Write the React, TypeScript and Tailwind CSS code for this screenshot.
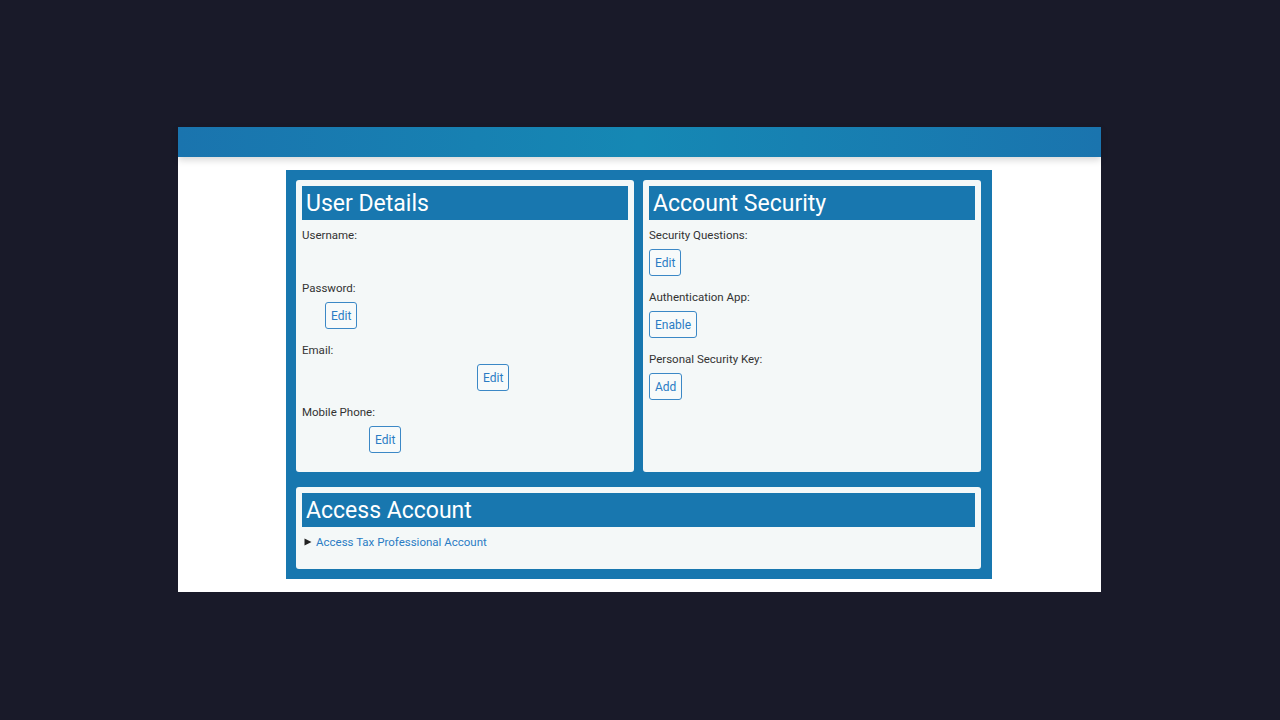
import React from "react";

const font = { fontFamily: "Roboto, 'Liberation Sans', sans-serif" };

function Btn({ children, ml = 0 }: { children: React.ReactNode; ml?: number }) {
  return (
    <div className="mt-[6px] flex" style={{ marginLeft: ml }}>
      <button className="h-[27px] rounded-[3px] border border-[#3b88c6] bg-[#f7fafa] px-[5px] text-[12px] leading-none text-[#2a7cc4]">
        {children}
      </button>
    </div>
  );
}

function Label({ children }: { children: React.ReactNode }) {
  return <div className="h-[16px] text-[11.5px] leading-[16px] text-[#333]">{children}</div>;
}

function Header({ children }: { children: React.ReactNode }) {
  return (
    <div className="flex h-[34px] items-center bg-[#1877af] pl-[4px] text-[23px] leading-none text-white">
      {children}
    </div>
  );
}

export default function App() {
  return (
    <div className="h-[720px] w-full bg-[#191a29] pt-[127px]" style={font}>
      <div className="ml-[178px] h-[465px] w-[923px] bg-white">
        <div className="relative h-[30px] bg-gradient-to-r from-[#1a74ae] via-[#1588b4] to-[#1a74ae] shadow-[0_3px_7px_rgba(0,0,0,0.16)]" />
        <div className="ml-[108px] mt-[13px] h-[409px] w-[706px] bg-[#1877af] pl-[10px] pt-[10px]">
          <div className="grid grid-cols-[338px_338px] gap-[9px]">
            <div className="h-[292px] rounded-[3px] bg-[#f4f8f8] p-[6px]">
              <Header>User Details</Header>
              <div className="mt-[7px]">
                <div className="h-[53px]">
                  <Label>Username:</Label>
                </div>
                <div className="mb-[13px]">
                  <Label>Password:</Label>
                  <Btn ml={23}>Edit</Btn>
                </div>
                <div className="mb-[13px]">
                  <Label>Email:</Label>
                  <Btn ml={175}>Edit</Btn>
                </div>
                <div>
                  <Label>Mobile Phone:</Label>
                  <Btn ml={67}>Edit</Btn>
                </div>
              </div>
            </div>
            <div className="h-[292px] rounded-[3px] bg-[#f4f8f8] p-[6px]">
              <Header>Account Security</Header>
              <div className="mt-[7px]">
                <div className="mb-[13px]">
                  <Label>Security Questions:</Label>
                  <Btn>Edit</Btn>
                </div>
                <div className="mb-[13px]">
                  <Label>Authentication App:</Label>
                  <Btn>Enable</Btn>
                </div>
                <div>
                  <Label>Personal Security Key:</Label>
                  <Btn>Add</Btn>
                </div>
              </div>
            </div>
          </div>
          <div className="mt-[15px] h-[82px] w-[685px] rounded-[3px] bg-[#f4f8f8] p-[6px]">
            <Header>Access Account</Header>
            <div className="mt-[7px] flex h-[16px] items-center pl-[2px] text-[11.5px] leading-[16px]">
              <svg width="8" height="8" viewBox="0 0 8 8" className="mr-[4px]">
                <path d="M0.5 0.5 L7.5 4 L0.5 7.5 Z" fill="#222" />
              </svg>
              <span className="text-[#2a7cc4]">Access Tax Professional Account</span>
            </div>
          </div>
        </div>
      </div>
    </div>
  );
}
